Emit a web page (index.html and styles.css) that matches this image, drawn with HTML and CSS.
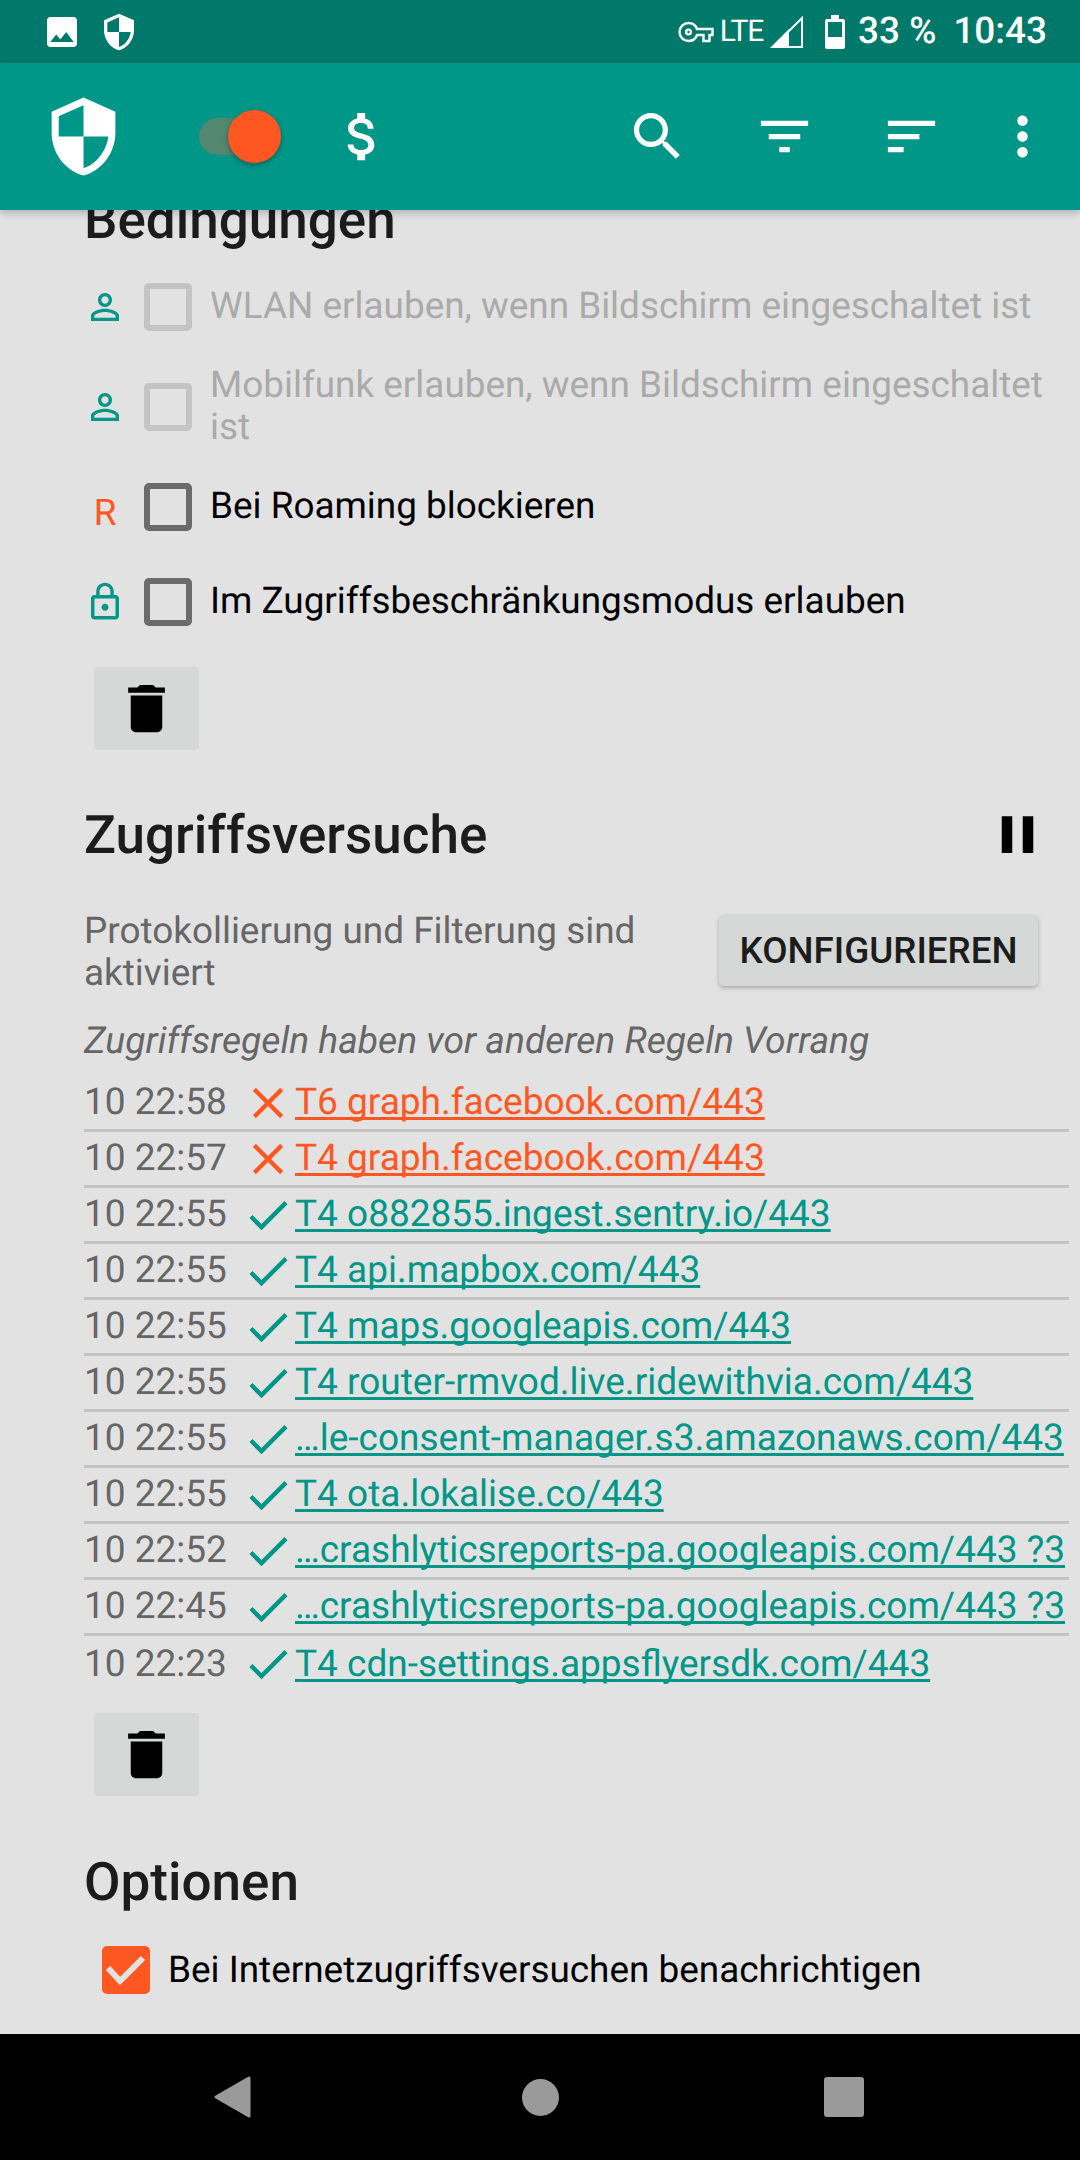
FILE: index.html
```html
<!DOCTYPE html>
<html lang="de">
<head>
  <meta charset="UTF-8">
  <title>Zugriffsversuche</title>
  <link rel="stylesheet" href="styles.css">
</head>
<body>
  <div class="phone">
    <!-- Statusleiste -->
    <div class="statusbar">
      <svg class="st-image" viewBox="0 0 24 24"><path d="M21 19V5c0-1.1-.9-2-2-2H5c-1.1 0-2 .9-2 2v14c0 1.1.9 2 2 2h14c1.1 0 2-.9 2-2zM8.5 13.5l2.5 3.01L14.5 12l4.5 6H5l3.5-4.5z"/></svg>
      <svg class="st-shield" viewBox="0 0 24 24"><path d="M12 1L3 5v6c0 5.55 3.84 10.74 9 12 5.16-1.26 9-6.45 9-12V5l-9-4zm0 10.99h7c-.53 4.12-3.28 7.79-7 8.94V12H5V6.3l7-3.11v8.8z"/></svg>
      <div class="spacer"></div>
      <svg class="st-key" viewBox="0 0 24 24"><path d="M12.65 10C11.83 7.67 9.61 6 7 6c-3.31 0-6 2.69-6 6s2.69 6 6 6c2.61 0 4.83-1.67 5.65-4H17v4h4v-4h2v-4H12.65z"/><circle cx="7" cy="12" r="1.6"/></svg>
      <span class="st-lte">LTE</span>
      <svg class="st-signal" viewBox="0 0 33 32"><path class="solid" d="M0 32L19 13V32Z"/><path class="line" d="M3 31L32 2V31Z"/></svg>
      <svg class="st-battery" viewBox="0 0 20 34"><path class="solid" d="M6 0h8v4h4a2 2 0 0 1 2 2v26a2 2 0 0 1-2 2H2a2 2 0 0 1-2-2V6a2 2 0 0 1 2-2h4z"/><rect class="hole" x="3" y="7" width="14" height="15"/></svg>
      <span class="st-pct">33 %</span>
      <span class="st-time">10:43</span>
    </div>

    <!-- Toolbar -->
    <div class="toolbar">
      <svg class="tb-logo" viewBox="0 0 24 24"><path d="M12 1L3 5v6c0 5.55 3.84 10.74 9 12 5.16-1.26 9-6.45 9-12V5l-9-4zm0 10.99h7c-.53 4.12-3.28 7.79-7 8.94V12H5V6.3l7-3.11v8.8z"/></svg>
      <div class="switch"><span class="thumb"></span></div>
      <svg class="tb-icon tb-money" viewBox="0 0 24 24"><path d="M11.8 10.9c-2.27-.59-3-1.2-3-2.15 0-1.09 1.01-1.85 2.7-1.85 1.78 0 2.44.85 2.5 2.1h2.21c-.07-1.72-1.12-3.3-3.21-3.81V3h-3v2.16c-1.94.42-3.5 1.68-3.5 3.61 0 2.31 1.91 3.46 4.7 4.13 2.5.6 3 1.48 3 2.41 0 .69-.49 1.79-2.7 1.79-2.06 0-2.87-.92-2.98-2.1h-2.2c.12 2.19 1.76 3.42 3.68 3.83V21h3v-2.15c1.95-.37 3.5-1.5 3.5-3.55 0-2.84-2.43-3.81-4.7-4.4z"/></svg>
      <div class="spacer"></div>
      <svg class="tb-icon" viewBox="0 0 24 24"><path d="M15.5 14h-.79l-.28-.27C15.41 12.59 16 11.11 16 9.5 16 5.91 13.09 3 9.5 3S3 5.91 3 9.5 5.91 16 9.5 16c1.61 0 3.09-.59 4.23-1.57l.27.28v.79l5 4.99L20.49 19l-4.99-5zm-6 0C7.01 14 5 11.99 5 9.5S7.01 5 9.5 5 14 7.01 14 9.5 11.99 14 9.5 14z"/></svg>
      <svg class="tb-icon" viewBox="0 0 24 24"><path d="M10 18h4v-2h-4v2zM3 6v2h18V6H3zm3 7h12v-2H6v2z"/></svg>
      <svg class="tb-icon" viewBox="0 0 24 24"><path d="M3 18h6v-2H3v2zM3 6v2h18V6H3zm0 7h12v-2H3v2z"/></svg>
      <svg class="tb-icon tb-more" viewBox="0 0 24 24"><path d="M12 8c1.1 0 2-.9 2-2s-.9-2-2-2-2 .9-2 2 .9 2 2 2zm0 2c-1.1 0-2 .9-2 2s.9 2 2 2 2-.9 2-2-.9-2-2-2zm0 6c-1.1 0-2 .9-2 2s.9 2 2 2 2-.9 2-2-.9-2-2-2z"/></svg>
    </div>

    <div class="content">
      <h2 class="first">Bedingungen</h2>

      <div class="cond">
        <svg class="cond-icon" viewBox="0 0 24 24"><path d="M12 5.9c1.16 0 2.1.94 2.1 2.1s-.94 2.1-2.1 2.1S9.9 9.16 9.9 8s.94-2.1 2.1-2.1m0 9c2.97 0 6.1 1.46 6.1 2.1v1.1H5.9V17c0-.64 3.13-2.1 6.1-2.1M12 4C9.79 4 8 5.79 8 8s1.79 4 4 4 4-1.79 4-4-1.79-4-4-4zm0 9c-2.67 0-8 1.34-8 4v3h16v-3c0-2.66-5.33-4-8-4z"/></svg>
        <span class="box off"></span>
        <span class="cond-text off">WLAN erlauben, wenn Bildschirm eingeschaltet ist</span>
      </div>
      <div class="cond">
        <svg class="cond-icon" viewBox="0 0 24 24"><path d="M12 5.9c1.16 0 2.1.94 2.1 2.1s-.94 2.1-2.1 2.1S9.9 9.16 9.9 8s.94-2.1 2.1-2.1m0 9c2.97 0 6.1 1.46 6.1 2.1v1.1H5.9V17c0-.64 3.13-2.1 6.1-2.1M12 4C9.79 4 8 5.79 8 8s1.79 4 4 4 4-1.79 4-4-1.79-4-4-4zm0 9c-2.67 0-8 1.34-8 4v3h16v-3c0-2.66-5.33-4-8-4z"/></svg>
        <span class="box off"></span>
        <span class="cond-text off">Mobilfunk erlauben, wenn Bildschirm eingeschaltet ist</span>
      </div>
      <div class="cond roam">
        <span class="cond-letter">R</span>
        <span class="box"></span>
        <span class="cond-text">Bei Roaming blockieren</span>
      </div>
      <div class="cond">
        <svg class="cond-icon" viewBox="0 0 24 24"><path d="M12 17c1.1 0 2-.9 2-2s-.9-2-2-2-2 .9-2 2 .9 2 2 2zm6-9h-1V6c0-2.76-2.24-5-5-5S7 3.24 7 6v2H6c-1.1 0-2 .9-2 2v10c0 1.1.9 2 2 2h12c1.1 0 2-.9 2-2V10c0-1.1-.9-2-2-2zM8.9 6c0-1.71 1.39-3.1 3.1-3.1s3.1 1.39 3.1 3.1v2H8.9V6zM18 20H6V10h12v10z"/></svg>
        <span class="box"></span>
        <span class="cond-text">Im Zugriffsbeschränkungsmodus erlauben</span>
      </div>

      <button class="trash"><svg viewBox="0 0 24 24"><path d="M6 19c0 1.1.9 2 2 2h8c1.1 0 2-.9 2-2V7H6v12zM19 4h-3.5l-1-1h-5l-1 1H5v2h14V4z"/></svg></button>

      <div class="head-row">
        <h2>Zugriffsversuche</h2>
        <svg class="pause" viewBox="0 0 24 24"><path d="M6 19h4V5H6v14zm8-14v14h4V5h-4z"/></svg>
      </div>

      <div class="config-row">
        <p class="config-text">Protokollierung und Filterung sind aktiviert</p>
        <button class="config-btn">KONFIGURIEREN</button>
      </div>
      <p class="hint">Zugriffsregeln haben vor anderen Regeln Vorrang</p>

      <div class="log">
        <div class="log-row">
          <span class="log-time">10 22:58</span>
          <svg class="log-icon deny" viewBox="0 0 24 24"><path d="M19 6.41L17.59 5 12 10.59 6.41 5 5 6.41 10.59 12 5 17.59 6.41 19 12 13.41 17.59 19 19 17.59 13.41 12z"/></svg>
          <a class="log-link deny">T6 graph.facebook.com/443</a>
        </div>
        <div class="log-row">
          <span class="log-time">10 22:57</span>
          <svg class="log-icon deny" viewBox="0 0 24 24"><path d="M19 6.41L17.59 5 12 10.59 6.41 5 5 6.41 10.59 12 5 17.59 6.41 19 12 13.41 17.59 19 19 17.59 13.41 12z"/></svg>
          <a class="log-link deny">T4 graph.facebook.com/443</a>
        </div>
        <div class="log-row">
          <span class="log-time">10 22:55</span>
          <svg class="log-icon" viewBox="0 0 24 24"><path d="M9 16.17L4.83 12l-1.42 1.41L9 19 21 7l-1.41-1.41z"/></svg>
          <a class="log-link">T4 o882855.ingest.sentry.io/443</a>
        </div>
        <div class="log-row">
          <span class="log-time">10 22:55</span>
          <svg class="log-icon" viewBox="0 0 24 24"><path d="M9 16.17L4.83 12l-1.42 1.41L9 19 21 7l-1.41-1.41z"/></svg>
          <a class="log-link">T4 api.mapbox.com/443</a>
        </div>
        <div class="log-row">
          <span class="log-time">10 22:55</span>
          <svg class="log-icon" viewBox="0 0 24 24"><path d="M9 16.17L4.83 12l-1.42 1.41L9 19 21 7l-1.41-1.41z"/></svg>
          <a class="log-link">T4 maps.googleapis.com/443</a>
        </div>
        <div class="log-row">
          <span class="log-time">10 22:55</span>
          <svg class="log-icon" viewBox="0 0 24 24"><path d="M9 16.17L4.83 12l-1.42 1.41L9 19 21 7l-1.41-1.41z"/></svg>
          <a class="log-link">T4 router-rmvod.live.ridewithvia.com/443</a>
        </div>
        <div class="log-row">
          <span class="log-time">10 22:55</span>
          <svg class="log-icon" viewBox="0 0 24 24"><path d="M9 16.17L4.83 12l-1.42 1.41L9 19 21 7l-1.41-1.41z"/></svg>
          <a class="log-link">…le-consent-manager.s3.amazonaws.com/443</a>
        </div>
        <div class="log-row">
          <span class="log-time">10 22:55</span>
          <svg class="log-icon" viewBox="0 0 24 24"><path d="M9 16.17L4.83 12l-1.42 1.41L9 19 21 7l-1.41-1.41z"/></svg>
          <a class="log-link">T4 ota.lokalise.co/443</a>
        </div>
        <div class="log-row">
          <span class="log-time">10 22:52</span>
          <svg class="log-icon" viewBox="0 0 24 24"><path d="M9 16.17L4.83 12l-1.42 1.41L9 19 21 7l-1.41-1.41z"/></svg>
          <a class="log-link">…crashlyticsreports-pa.googleapis.com/443 ?3</a>
        </div>
        <div class="log-row">
          <span class="log-time">10 22:45</span>
          <svg class="log-icon" viewBox="0 0 24 24"><path d="M9 16.17L4.83 12l-1.42 1.41L9 19 21 7l-1.41-1.41z"/></svg>
          <a class="log-link">…crashlyticsreports-pa.googleapis.com/443 ?3</a>
        </div>
        <div class="log-row last">
          <span class="log-time">10 22:23</span>
          <svg class="log-icon" viewBox="0 0 24 24"><path d="M9 16.17L4.83 12l-1.42 1.41L9 19 21 7l-1.41-1.41z"/></svg>
          <a class="log-link">T4 cdn-settings.appsflyersdk.com/443</a>
        </div>
      </div>

      <button class="trash trash-log"><svg viewBox="0 0 24 24"><path d="M6 19c0 1.1.9 2 2 2h8c1.1 0 2-.9 2-2V7H6v12zM19 4h-3.5l-1-1h-5l-1 1H5v2h14V4z"/></svg></button>

      <h2 class="options">Optionen</h2>
      <div class="notify">
        <span class="box on"><svg viewBox="0 0 48 48"><path d="M6 22L18 35L41 12"/></svg></span>
        <span class="notify-text">Bei Internetzugriffsversuchen benachrichtigen</span>
      </div>
    </div>

    <!-- Navigationsleiste -->
    <div class="navbar">
      <svg class="nav-back" viewBox="0 0 37 42"><path d="M35 2L2 21L35 40Z"/></svg>
      <span class="nav-home"></span>
      <span class="nav-recent"></span>
    </div>
  </div>
</body>
</html>
```
FILE: styles.css
```css
* {
  box-sizing: border-box;
}

body {
  margin: 0;
  background: #000;
}

.phone {
  width: 1080px;
  height: 2160px;
  display: flex;
  flex-direction: column;
  overflow: hidden;
  font-family: Roboto, sans-serif;
  font-size: 36.9px;
  text-rendering: geometricPrecision;
  background: #e2e2e2;
}

.spacer {
  flex: 1;
}

h2 {
  margin: 0;
  font-size: 53px;
  font-weight: 500;
  line-height: 56px;
  color: #1c1c1c;
}

/* Statusleiste */
.statusbar {
  height: 63px;
  flex: none;
  display: flex;
  align-items: center;
  padding: 0 33px 0 42px;
  background: #00796b;
  color: #fff;
  font-weight: 500;
}

.statusbar svg {
  fill: #fff;
  flex: none;
}

.st-image {
  width: 40px;
  height: 40px;
}

.st-shield {
  width: 40px;
  height: 40px;
  margin-left: 17px;
}

.statusbar .st-key {
  width: 36px;
  height: 36px;
  fill: none;
  stroke: #fff;
  stroke-width: 1.6;
}

.st-lte {
  margin-left: 6px;
  font-size: 30px;
  font-weight: 400;
  letter-spacing: -1.2px;
}

.st-signal {
  width: 33px;
  height: 32px;
  margin-left: 7px;
}

.statusbar .st-signal .line {
  fill: none;
  stroke: #fff;
  stroke-width: 2;
}

.st-battery {
  width: 20px;
  height: 34px;
  margin-left: 22px;
}

.statusbar .st-battery .hole {
  fill: #00796b;
}

.st-pct {
  margin-left: 13px;
}

.st-time {
  margin-left: 17px;
}

/* Toolbar */
.toolbar {
  height: 147px;
  flex: none;
  display: flex;
  align-items: center;
  padding: 0 0 0 41px;
  background: #009688;
  box-shadow: 0 3px 8px rgba(0, 0, 0, 0.22);
  position: relative;
  z-index: 2;
}

.toolbar svg {
  fill: #fff;
  flex: none;
}

.tb-logo {
  width: 85px;
  height: 85px;
}

.switch {
  width: 66px;
  height: 37px;
  margin-left: 73px;
  border-radius: 19px;
  background: #54876f;
  position: relative;
}

.thumb {
  position: absolute;
  left: 29px;
  top: -8px;
  width: 53px;
  height: 53px;
  border-radius: 50%;
  background: #ff5722;
  box-shadow: 0 2px 5px rgba(0, 0, 0, 0.35);
}

.tb-icon {
  width: 63px;
  height: 63px;
  margin-right: 64px;
}

.tb-money {
  margin-left: 66px;
}

.tb-more {
  margin-right: 26px;
  margin-left: -16px;
}

/* Inhalt */
.content {
  flex: 1;
  min-height: 0;
  overflow: hidden;
  padding: 0 0 0 84px;
}

.first {
  margin-top: -18px;
  margin-bottom: 27px;
}

.cond {
  display: flex;
  align-items: center;
  min-height: 63px;
  margin-bottom: 26px;
  margin-left: -84px;
}

.roam {
  margin-bottom: 32px;
}

.cond-icon {
  width: 42px;
  height: 42px;
  margin-left: 84px;
  flex: none;
  fill: #009688;
}

.cond-letter {
  width: 42px;
  margin-left: 84px;
  flex: none;
  text-align: center;
  font-size: 36.75px;
  line-height: 42px;
  padding-top: 12px;
  color: #ff5722;
}

.box {
  width: 48px;
  height: 48px;
  flex: none;
  margin-left: 18px;
  border: 6px solid #6b6b6b;
  border-radius: 5px;
}

.box.off {
  border-color: #c4c4c4;
}

.cond-text {
  width: 840px;
  margin-left: 18px;
  padding-top: 1px;
  line-height: 42px;
  color: #000;
}

.cond-text.off {
  color: #aaa;
}

.trash {
  display: flex;
  align-items: center;
  justify-content: center;
  width: 105px;
  height: 83px;
  margin: 34px 0 0 10px;
  padding: 0;
  border: none;
  border-radius: 4px;
  background: #d6d8d8;
}

.trash svg {
  width: 63px;
  height: 63px;
}

.head-row {
  display: flex;
  align-items: center;
  justify-content: space-between;
  margin-top: 53px;
  padding-right: 31px;
}

.pause {
  width: 63px;
  height: 63px;
  fill: #000;
}

.config-row {
  display: flex;
  align-items: flex-start;
  justify-content: space-between;
  margin-top: 45px;
  padding-right: 42px;
}

.config-text {
  width: 600px;
  margin: 0;
  line-height: 42px;
  color: #666;
}

.config-btn {
  width: 319px;
  height: 71px;
  margin-top: 4px;
  padding: 0;
  border: none;
  border-radius: 5px;
  background: #d6d8d8;
  box-shadow: 0 2px 4px rgba(0, 0, 0, 0.25);
  font-family: inherit;
  font-size: 36.75px;
  font-weight: 500;
  color: #1c1c1c;
}

.hint {
  margin: 25px 0 0;
  line-height: 42px;
  font-style: italic;
  font-size: 37.2px;
  color: #666;
}

.log {
  margin-top: 14px;
  margin-right: 11px;
  font-size: 37px;
}

.log-row {
  display: flex;
  align-items: center;
  height: 56px;
  border-bottom: 3px solid #c4c4c4;
  white-space: nowrap;
}

.log-row.last {
  border-bottom: none;
}

.log-time {
  width: 158px;
  flex: none;
  color: #666;
}

.log-icon {
  width: 52px;
  height: 52px;
  flex: none;
  fill: #009688;
}

.log-icon.deny {
  fill: #ff5722;
}

.log-link {
  margin-left: 1px;
  color: #009688;
  text-decoration: underline;
  text-decoration-skip-ink: none;
  text-decoration-thickness: 3px;
  text-underline-offset: 3px;
}

.log-link.deny {
  color: #ff5722;
}

.trash-log {
  margin-top: 21px;
}

.options {
  margin-top: 58px;
}

.notify {
  display: flex;
  align-items: center;
  margin-top: 36px;
  margin-left: 18px;
}

.box.on {
  margin-left: 0;
  border: none;
  background: #ff5722;
}

.box.on svg {
  display: block;
  width: 48px;
  height: 48px;
  fill: none;
  stroke: #e2e2e2;
  stroke-width: 6;
}

.notify-text {
  margin-left: 18px;
  color: #000;
}

/* Navigationsleiste */
.navbar {
  height: 126px;
  flex: none;
  display: flex;
  align-items: center;
  background: #000;
  padding-left: 214px;
}

.nav-back {
  width: 37px;
  height: 42px;
  fill: #9a9a9a;
  stroke: #9a9a9a;
  stroke-width: 3;
  stroke-linejoin: round;
}

.nav-home {
  width: 37px;
  height: 37px;
  margin-left: 271px;
  border-radius: 50%;
  background: #9a9a9a;
}

.nav-recent {
  width: 40px;
  height: 40px;
  margin-left: 265px;
  border-radius: 3px;
  background: #9a9a9a;
}
```
